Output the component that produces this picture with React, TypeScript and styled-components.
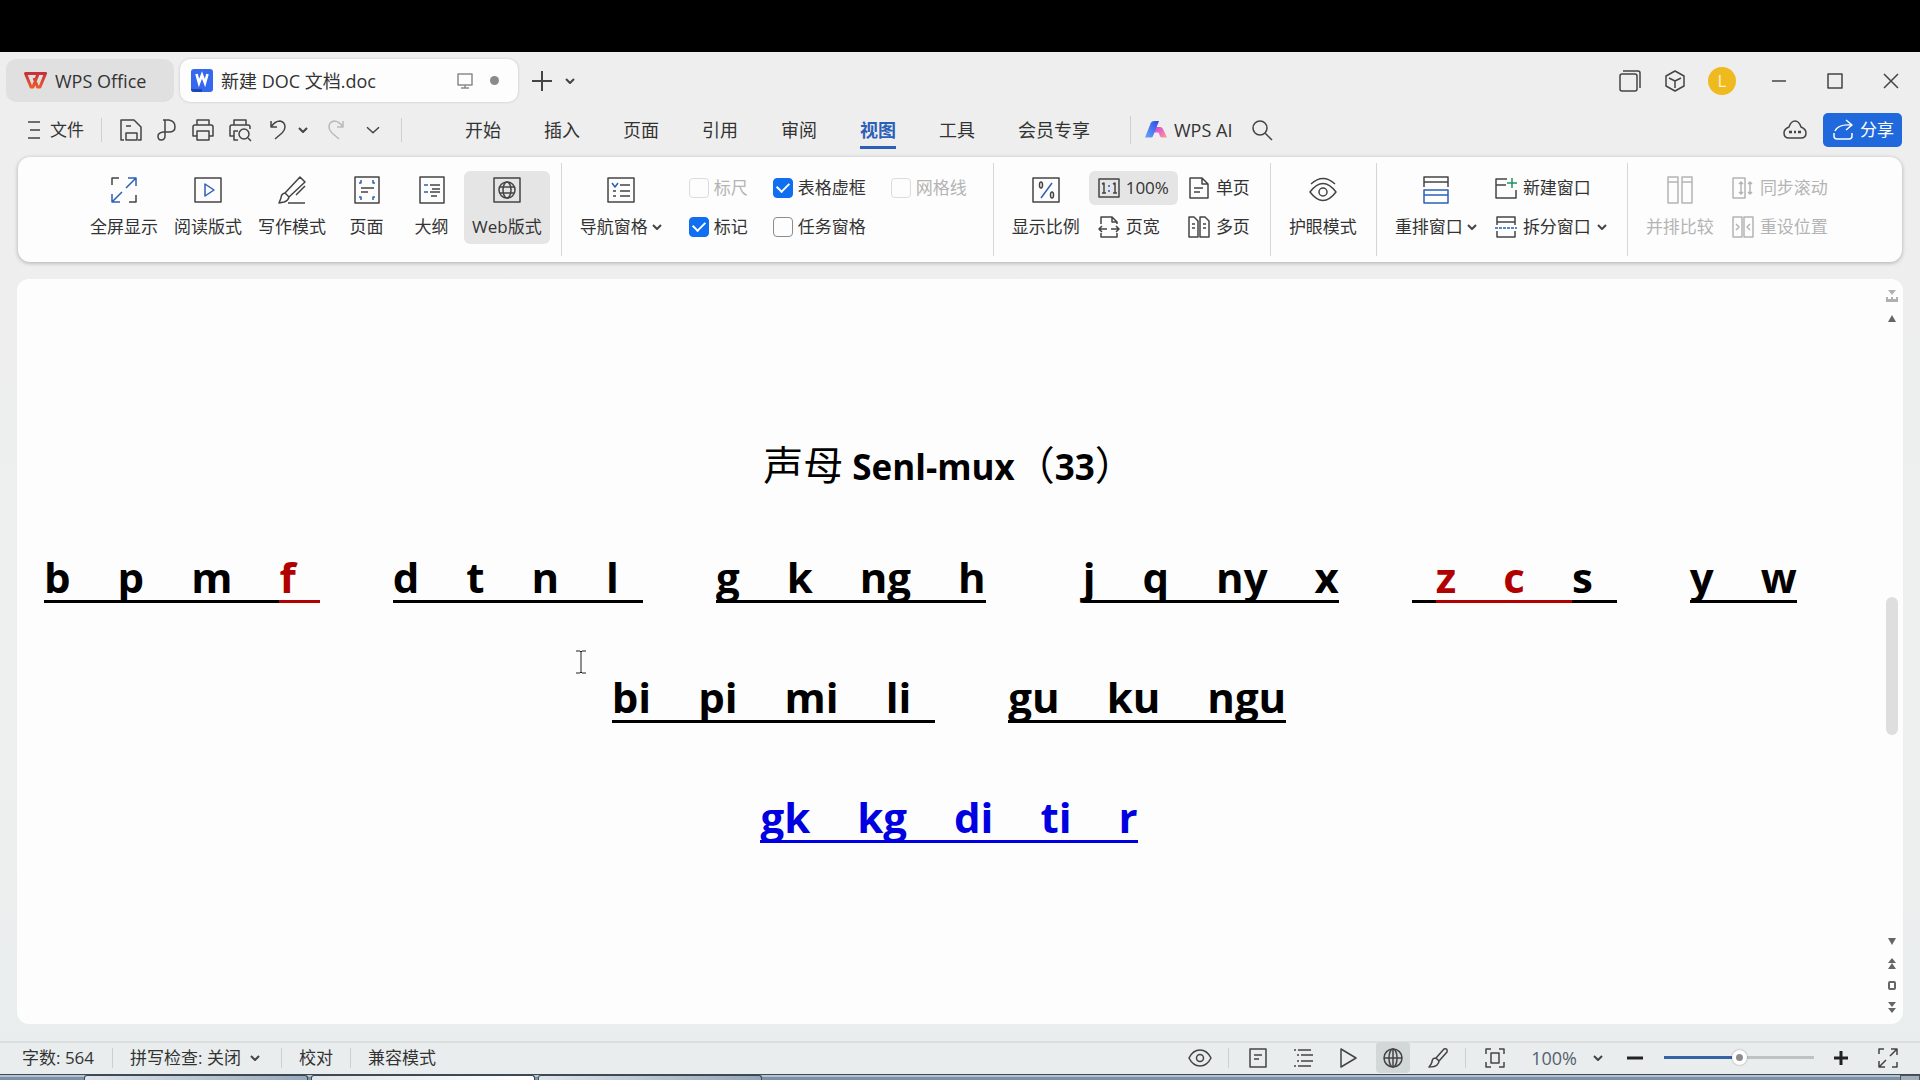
import React, { useState } from "react";
import styled, { createGlobalStyle, css } from "styled-components";

const ink = "#444";
const blue = "#2b5fb8";
const faded = "#b4b4b4";

const GlobalStyle = createGlobalStyle`
  * { box-sizing: border-box; }
  html, body, #root { height: 100%; }
  body {
    margin: 0;
    background: #000;
    color: #333;
    font: 17px/24px "Open Sans", "Noto Sans CJK SC", sans-serif;
  }
  button, select, input { font: inherit; color: inherit; margin: 0; }
  button { border: 0; background: none; padding: 0; }
  svg { display: block; flex: none; }
`;

const Screen = styled.div`
  min-height: 100vh;
  display: flex;
  flex-direction: column;
  padding-top: 52px;
  background: #000;
`;

const AppWindow = styled.div`
  flex: 1;
  display: flex;
  flex-direction: column;
  background: linear-gradient(#eeeeee 0%, #eeefef 70%, #e9eded 100%);
`;

/* ---------- title bar ---------- */

const TitleBar = styled.header`
  height: 50px;
  display: flex;
  align-items: center;
  padding: 7px 17px 0 6px;
`;

const FileTab = styled.button<{ $active?: boolean; $width: number }>`
  width: ${(p) => p.$width}px;
  height: 43px;
  display: flex;
  align-items: center;
  gap: 8px;
  margin-right: 6px;
  padding: 0 ${(p) => (p.$active ? 19 : 18)}px 0 ${(p) => (p.$active ? 11 : 18)}px;
  border-radius: 10px;
  font-size: 18px;
  background: ${(p) => (p.$active ? "#fdfdfd" : "#e0e0e0")};
  box-shadow: ${(p) => (p.$active ? "0 0 3px rgba(0, 0, 0, 0.18)" : "none")};
`;

const TabName = styled.span`
  flex: 1;
  text-align: left;
  white-space: nowrap;
`;

const TabMarks = styled.span`
  display: flex;
  align-items: center;
  gap: 17px;
`;

const Dot = styled.i`
  width: 9px;
  height: 9px;
  border-radius: 50%;
  background: #8a8a8a;
`;

const IconButton = styled.button<{ $width?: number }>`
  width: ${(p) => p.$width ?? 24}px;
  height: 32px;
  display: inline-flex;
  align-items: center;
  justify-content: center;
`;

const Spacer = styled.div`
  flex: 1;
`;

const WindowTools = styled.div`
  display: flex;
  align-items: center;
  gap: 21px;
  margin-right: 31px;
`;

const Avatar = styled.button`
  width: 28px;
  height: 28px;
  border-radius: 50%;
  background: #efb920;
  color: #fff3cf;
  line-height: 28px;
  text-align: center;
`;

const WindowControls = styled.div`
  display: flex;
  gap: 32px;
`;

/* ---------- menu row ---------- */

const MenuRow = styled.nav`
  height: 55px;
  display: flex;
  align-items: center;
  padding: 0 18px 0 28px;
`;

const FileMenu = styled.button`
  display: flex;
  align-items: center;
  gap: 9px;
`;

const Rule = styled.i<{ $space?: string; $height?: number }>`
  width: 1px;
  height: ${(p) => p.$height ?? 24}px;
  margin: ${(p) => p.$space ?? "0 17px"};
  background: #cfcfcf;
`;

const QuickBar = styled.div`
  display: flex;
  align-items: center;
  gap: 13px;
`;

const UndoPair = styled.div`
  display: flex;
  align-items: center;
  gap: 4px;
`;

const MenuTabs = styled.div`
  display: flex;
  gap: 43px;
  margin-left: 46px;
`;

const MenuTab = styled.button<{ $active?: boolean }>`
  height: 38px;
  padding-top: 3px;
  font-size: 18px;
  line-height: 28px;
  border-bottom: 3px solid transparent;
  ${(p) =>
    p.$active &&
    css`
      color: ${blue};
      font-weight: 700;
      border-color: ${blue};
    `}
`;

const AiButton = styled.button`
  display: flex;
  align-items: center;
  gap: 7px;
  margin-right: 18px;
  font-size: 18px;
`;

const ShareButton = styled.button`
  height: 34px;
  display: flex;
  align-items: center;
  gap: 6px;
  margin-left: 16px;
  padding: 0 8px 0 9px;
  border-radius: 5px;
  background: #1f69dc;
  color: #fff;
`;

/* ---------- ribbon ---------- */

const Ribbon = styled.section`
  display: flex;
  min-height: 105px;
  margin: 0 18px;
  padding: 6px 0 6px 53px;
  border-radius: 12px;
  background: #fdfdfd;
  box-shadow: 0 1px 4px rgba(0, 0, 0, 0.28);
`;

const Group = styled.div`
  display: flex;
  align-items: flex-start;
  padding: 8px 11px 0 10px;
  border-left: 1px solid #d6d6d6;
  &:first-child {
    border-left-color: transparent;
  }
`;

const BigButton = styled.button<{ $active?: boolean }>`
  min-width: 65px;
  height: 73px;
  display: flex;
  flex-direction: column;
  align-items: center;
  gap: 11px;
  padding: 5px 8px 0;
  border-radius: 6px;
  white-space: nowrap;
  background: ${(p) => (p.$active ? "#e5e5e5" : "none")};
  &:disabled { color: ${faded}; }
`;

const SmallButton = styled.button<{ $active?: boolean }>`
  height: 34px;
  display: flex;
  align-items: center;
  gap: 6px;
  padding: 0 9px;
  border-radius: 6px;
  white-space: nowrap;
  background: ${(p) => (p.$active ? "#e5e5e5" : "none")};
  &:disabled { color: ${faded}; }
`;

const Stack = styled.div`
  display: flex;
  flex-direction: column;
  gap: 5px;
  margin-left: 1px;
`;

const CaptionRow = styled.span`
  display: flex;
  align-items: center;
  gap: 4px;
`;

const CheckGrid = styled.div`
  display: grid;
  grid-template-columns: repeat(3, auto);
  gap: 5px 25px;
  padding: 0 15px 0 19px;
`;

const CheckLabel = styled.label<{ $disabled?: boolean }>`
  height: 34px;
  display: flex;
  align-items: center;
  gap: 5px;
  white-space: nowrap;
  color: ${(p) => (p.$disabled ? faded : "inherit")};
`;

const CheckBox = styled.input`
  appearance: none;
  width: 20px;
  height: 20px;
  display: grid;
  place-items: center;
  border: 1px solid #8c8c8c;
  border-radius: 4px;
  background: #fdfdfd;
  &:disabled { border-color: #dcdcdc; }
  &:checked { background: #0f6ff0; border-color: #0f6ff0; }
  &:checked::after {
    content: "";
    width: 10px;
    height: 6px;
    margin-bottom: 4px;
    border: solid #fff;
    border-width: 0 0 2px 2px;
    transform: rotate(-45deg);
  }
`;

/* ---------- document ---------- */

const DocumentPane = styled.main`
  position: relative;
  flex: 1;
  display: flex;
  margin: 17px 17px;
  border-radius: 12px;
  background: #fdfdfd;
`;

const Page = styled.article`
  flex: 1;
  padding-top: 148px;
  color: #000;
  font: 700 42px/120px "Open Sans", "Noto Sans CJK SC", sans-serif;
`;

const Heading = styled.h1`
  margin: 0 0 15px;
  font-size: 35px;
  line-height: 72px;
  text-align: center;
`;

const HeadingHan = styled.span`
  font-family: "Noto Sans CJK SC", sans-serif;
  font-size: 40px;
  font-weight: 400;
`;

const Line = styled.p<{ $start?: boolean }>`
  height: 120px;
  display: flex;
  justify-content: ${(p) => (p.$start ? "flex-start" : "center")};
  align-items: center;
  margin: 0;
  padding-left: ${(p) => (p.$start ? 27 : 0)}px;
`;

const Cluster = styled.span<{ $before?: number }>`
  display: flex;
  margin-left: ${(p) => p.$before ?? 0}px;
`;

const Run = styled.span<{ $color?: string; $lead?: number; $tail?: number }>`
  height: 50px;
  display: flex;
  gap: 47px;
  padding: 0 ${(p) => p.$tail ?? 0}px 0 ${(p) => p.$lead ?? 0}px;
  line-height: 48px;
  color: ${(p) => p.$color ?? "#000"};
  border-bottom: 3px solid ${(p) => p.$color ?? "#000"};
`;

const ScrollRail = styled.aside`
  width: 22px;
  display: flex;
  flex-direction: column;
  align-items: center;
  padding: 6px 0;
`;

const RailButton = styled.button`
  width: 22px;
  height: 22px;
  display: grid;
  place-items: center;
`;

const Track = styled.div`
  flex: 1;
  width: 12px;
  display: flex;
  flex-direction: column;
  padding-top: 268px;
`;

const Thumb = styled.div`
  height: 138px;
  border-radius: 6px;
  background: #dedede;
`;

const TextCursor = styled.svg`
  position: absolute;
  left: 559px;
  top: 371px;
`;

/* ---------- status bar ---------- */

const StatusBar = styled.footer`
  height: 33px;
  display: flex;
  align-items: center;
  padding: 0 20px 2px 22px;
  border-top: 2px solid #dcdfdf;
  background: #e9eded;
`;

const StatusButton = styled.button`
  display: flex;
  align-items: center;
  gap: 9px;
  white-space: nowrap;
`;

const ViewButton = styled.button<{ $active?: boolean }>`
  width: 34px;
  height: 31px;
  display: grid;
  place-items: center;
  border-radius: 4px;
  background: ${(p) => (p.$active ? "#d2d7d7" : "none")};
`;

const ViewGroup = styled.div`
  display: flex;
  gap: 11px;
`;

const ZoomText = styled(StatusButton)`
  gap: 16px;
  margin: 0 20px 0 25px;
  font-size: 18px;
  color: #56616e;
`;

const ZoomSlider = styled.input`
  appearance: none;
  width: 150px;
  height: 20px;
  margin: 0 15px 0 17px;
  background: linear-gradient(90deg, #3564a5 50%, #bfc2c3 50%) center / 100% 3px no-repeat;
  &::-webkit-slider-thumb {
    appearance: none;
    width: 15px;
    height: 15px;
    border: 4px solid #fff;
    border-radius: 50%;
    background: #8d8d8d;
    box-shadow: 0 0 2px rgba(0, 0, 0, 0.4);
  }
`;

/* ---------- desktop task bar edge ---------- */

const TaskBar = styled.div`
  height: 6px;
  display: flex;
  gap: 3px;
  padding-left: 84px;
  border-top: 1px solid #3f4a55;
  background: linear-gradient(#b4c2cf 0 2px, #7d91a5 2px);
`;

const TaskItem = styled.i<{ $tone: string; $edge?: string }>`
  width: 224px;
  border: solid #3b4752;
  border-width: 1px 1px 0;
  border-left-color: ${(p) => p.$edge ?? "#3b4752"};
  border-radius: 3px 3px 0 0;
  background: linear-gradient(90deg, #dfe5ea, ${(p) => p.$tone});
`;

const DesktopCorner = styled.i`
  width: 20px;
  margin-left: auto;
  border: 1px solid #4a5661;
  border-bottom: 0;
  background: #a3aeb8;
`;

/* ---------- icons ---------- */

type IconProps = {
  w?: number;
  h?: number;
  color?: string;
  sw?: number;
  children: React.ReactNode;
};

const Icon = ({ w = 24, h = 24, color = ink, sw = 1.5, children }: IconProps) => (
  <svg
    width={w}
    height={h}
    viewBox={`0 0 ${w} ${h}`}
    fill="none"
    stroke={color}
    strokeWidth={sw}
    strokeLinejoin="round"
    aria-hidden="true"
  >
    {children}
  </svg>
);

const Chevron = ({ size = 10, sw = 2 }: { size?: number; sw?: number }) => (
  <Icon w={size} h={size} sw={sw}>
    <path d={`M1 ${size * 0.3}L${size / 2} ${size * 0.7}L${size - 1} ${size * 0.3}`} />
  </Icon>
);

const WpsLogo = () => (
  <svg width="23" height="17" viewBox="0 0 23 17" fill="none" strokeWidth="3" strokeLinejoin="round" aria-hidden="true">
    <defs>
      <linearGradient id="wpsRed" x1="0" y1="0" x2="0" y2="1">
        <stop offset="0" stopColor="#c9303a" />
        <stop offset="1" stopColor="#ec5a2c" />
      </linearGradient>
    </defs>
    <path d="M10 6L13.500 15H16L21.500 1.500H1.500L7 15H9L14 2" stroke="url(#wpsRed)" />
  </svg>
);

const WordLogo = () => (
  <svg width="22" height="23" viewBox="0 0 22 23" aria-hidden="true">
    <rect width="22" height="23" rx="3" fill="#3668ee" />
    <path d="M0 20H11V23H3Q0 23 0 20Z" fill="#1c46b4" />
    <path d="M5.500 5L8 14L11 6L14 14L16.500 5" fill="none" stroke="#fff" strokeWidth="2.600" />
  </svg>
);

const AiLogo = () => (
  <svg width="22" height="17" viewBox="0 0 22 17" aria-hidden="true">
    <defs>
      <linearGradient id="aiBlue" x1="1" y1="0" x2="0" y2="1">
        <stop offset="0" stopColor="#2a49e8" />
        <stop offset="1" stopColor="#6aa5f8" />
      </linearGradient>
      <linearGradient id="aiPink" x1="0" y1="0" x2="1" y2="1">
        <stop offset="0" stopColor="#d43be0" />
        <stop offset="1" stopColor="#ff9a9a" />
      </linearGradient>
    </defs>
    <path d="M10 6H15Q17 6 18 8L22 16.500H17Q15.500 16.500 15 15L13.500 11.500H8Z" fill="url(#aiPink)" />
    <path d="M0 16.500L6 1.500Q7 0 9 0H14L8 15Q7.500 16.500 6 16.500Z" fill="url(#aiBlue)" />
  </svg>
);

const GlobeShape = ({ cx, cy, r }: { cx: number; cy: number; r: number }) => (
  <>
    <circle cx={cx} cy={cy} r={r} />
    <ellipse cx={cx} cy={cy} rx={r * 0.45} ry={r} />
    <path d={`M${cx - r} ${cy}H${cx + r}M${cx} ${cy - r}V${cy + r}`} />
  </>
);

const bigIcons: Record<string, React.ReactNode> = {
  fullscreen: (
    <Icon w={28} h={28}>
      <path d="M2 9V2H9M26 19V26H19" />
      <path d="M16 12L26 2M18 2H26V10M12 16L2 26M2 18V26H10" stroke={blue} />
    </Icon>
  ),
  read: (
    <Icon w={28} h={28}>
      <rect x="1" y="2" width="26" height="24" />
      <path d="M11 8L20 14L11 20Z" stroke={blue} />
    </Icon>
  ),
  write: (
    <Icon w={28} h={28}>
      <path d="M22 1L27 6L11 21L7 17ZM7 17Q3 18 3 22L1 27L6 26Q10 25 11 21M18 19L27 10M10 27H27" />
    </Icon>
  ),
  page: (
    <Icon w={28} h={28}>
      <rect x="2" y="1" width="24" height="26" />
      <path d="M8 12H21M8 16H15" />
      <path d="M6 7H8V4M20 4V7H22M6 21H8V24M20 24V21H22" stroke={blue} />
    </Icon>
  ),
  outline: (
    <Icon w={28} h={28}>
      <rect x="2" y="1" width="24" height="26" />
      <path d="M12 9H22M14 13H22M12 16H22M13 20H19" />
      <path d="M6 9H10M6 16H10" stroke={blue} />
    </Icon>
  ),
  web: (
    <Icon w={28} h={28}>
      <rect x="1" y="2" width="26" height="24" />
      <circle cx="14" cy="14" r="8" />
      <ellipse cx="14" cy="14" rx="4" ry="8" />
      <path d="M7 11H21M7 17H21" />
    </Icon>
  ),
  nav: (
    <Icon w={28} h={28}>
      <rect x="1" y="2" width="26" height="24" />
      <path d="M13 9H23M13 15H23M13 20H23M6 15H9M6 20H9" />
      <path d="M5 7L8 11L11 7" stroke={blue} />
    </Icon>
  ),
  percent: (
    <Icon w={28} h={28}>
      <rect x="1" y="2" width="26" height="24" />
      <path d="M20 7L9 22" stroke={blue} />
      <ellipse cx="9" cy="9" rx="1.500" ry="3" />
      <ellipse cx="20" cy="19" rx="1.500" ry="3" />
    </Icon>
  ),
  eye: (
    <Icon w={28} h={28}>
      <path d="M1 16Q14 -1 27 16Q14 33 1 16Z" />
      <circle cx="14" cy="16" r="4" />
      <path d="M2 8Q14 -3 26 8" />
    </Icon>
  ),
  arrange: (
    <Icon w={28} h={28}>
      <path d="M2 11V1H26V11M2 6H26" />
      <path d="M2 14H26V27H2ZM2 19H26" stroke={blue} />
    </Icon>
  ),
  compare: (
    <Icon w={28} h={28} color={faded}>
      <path d="M2 1H12V27H2ZM2 6H12M16 1H26V27H16ZM16 6H26" />
    </Icon>
  ),
};

const smallIcons: Record<string, React.ReactNode> = {
  ratio: (
    <Icon w={22} h={22}>
      <rect x="1" y="2" width="20" height="18" />
      <path d="M4 7L6 6V16M4 16H8M15 7L17 6V16M15 16H19" />
      <path d="M11 8V10M11 13V15" stroke={blue} />
    </Icon>
  ),
  width: (
    <Icon w={22} h={22}>
      <path d="M3 8V1H14L19 6V8M14 1V6H19M3 17V21H19V17M9 13H1M4 10L1 13L4 16M13 13H21M18 10L21 13L18 16" />
    </Icon>
  ),
  single: (
    <Icon w={22} h={22}>
      <path d="M2 1H14L20 7V21H2ZM14 1V7H20M6 11H15M6 15H12" />
    </Icon>
  ),
  multi: (
    <Icon w={22} h={22}>
      <path d="M1 1H6L10 5V21H1ZM12 1H17L21 5V21H12ZM4 8H7M4 12H7M15 8H18M15 12H18" />
    </Icon>
  ),
  newWindow: (
    <Icon w={22} h={22}>
      <path d="M12 2H1V21H21V13M1 8H11" />
      <path d="M17 1V11M12 6H22" stroke="#1e9461" />
    </Icon>
  ),
  split: (
    <Icon w={22} h={22}>
      <path d="M2 9V1H20V9M2 6H20M2 15V21H20V15" />
      <path d="M0 12H22" stroke={blue} strokeDasharray="3 1" />
    </Icon>
  ),
  sync: (
    <Icon w={22} h={22} color={faded}>
      <path d="M1 1H13V21H1ZM9 5V17M7 7L9 5L11 7M7 15L9 17L11 15M18 5V17M16 7L18 5L20 7M16 15L18 17L20 15" />
    </Icon>
  ),
  reset: (
    <Icon w={22} h={22} color={faded}>
      <path d="M1 1H10V21H1ZM12 1H21V21H12ZM4 8L7 11L4 14M18 8L15 11L18 14" />
    </Icon>
  ),
};

const PenShape = () => (
  <path d="M17 2Q21 1 20 5L12 14L9 11ZM9 11Q5 11 5 15Q4 18 2 20Q8 20 10 18Q12 16 12 14" />
);

/* ---------- parts ---------- */

type ButtonData = { icon: string; label: string; active?: boolean; disabled?: boolean; menu?: boolean };

const Big = ({ icon, label, active, disabled, menu }: ButtonData) => (
  <BigButton $active={active} disabled={disabled}>
    {bigIcons[icon]}
    <CaptionRow>
      {label}
      {menu && <Chevron />}
    </CaptionRow>
  </BigButton>
);

const Small = ({ icon, label, active, disabled, menu }: ButtonData) => (
  <SmallButton $active={active} disabled={disabled}>
    {smallIcons[icon]}
    {label}
    {menu && <Chevron />}
  </SmallButton>
);

const Check = ({ label, on, disabled }: { label: string; on?: boolean; disabled?: boolean }) => (
  <CheckLabel $disabled={disabled}>
    <CheckBox type="checkbox" defaultChecked={on} disabled={disabled} />
    {label}
  </CheckLabel>
);

type RunData = { letters: string[]; color?: string; lead?: number; tail?: number };

const Letters = ({ runs, before }: { runs: RunData[]; before?: number }) => (
  <Cluster $before={before}>
    {runs.map((run, i) => (
      <Run key={i} $color={run.color} $lead={run.lead} $tail={run.tail}>
        {run.letters.map((letter) => (
          <span key={letter}>{letter}</span>
        ))}
      </Run>
    ))}
  </Cluster>
);

const red = "#b00000";
const link = "#0000e0";
const menuNames = ["开始", "插入", "页面", "引用", "审阅", "视图", "工具", "会员专享"];

export default function App() {
  const [zoom, setZoom] = useState(100);

  return (
    <Screen>
      <GlobalStyle />
      <AppWindow>
        <TitleBar>
          <FileTab $width={168}>
            <WpsLogo />
            <TabName>WPS Office</TabName>
          </FileTab>
          <FileTab $active $width={338}>
            <WordLogo />
            <TabName>新建 DOC 文档.doc</TabName>
            <TabMarks>
              <Icon w={16} h={16} color="#8a8a8a">
                <path d="M1 1H15V12H1ZM8 12V15M4 15H12" />
              </Icon>
              <Dot />
            </TabMarks>
          </FileTab>
          <IconButton $width={36} aria-label="新建">
            <Icon w={20} h={20} sw={2}>
              <path d="M10 0V20M0 10H20" />
            </Icon>
          </IconButton>
          <IconButton $width={20} aria-label="标签列表">
            <Chevron />
          </IconButton>
          <Spacer />
          <WindowTools>
            <IconButton aria-label="窗口">
              <Icon>
                <rect x="2" y="5" width="17" height="17" rx="2" />
                <path d="M5 2H20Q22 2 22 4V19" />
              </Icon>
            </IconButton>
            <IconButton aria-label="应用">
              <Icon>
                <path d="M12 2L21 7V17L12 22L3 17V7ZM6 9L12 12L18 9M12 12V19" />
              </Icon>
            </IconButton>
            <Avatar>L</Avatar>
          </WindowTools>
          <WindowControls>
            <IconButton aria-label="最小化">
              <Icon><path d="M5 12H19" /></Icon>
            </IconButton>
            <IconButton aria-label="最大化">
              <Icon><path d="M5 5H19V19H5Z" /></Icon>
            </IconButton>
            <IconButton aria-label="关闭">
              <Icon><path d="M5 5L19 19M19 5L5 19" /></Icon>
            </IconButton>
          </WindowControls>
        </TitleBar>

        <MenuRow>
          <FileMenu>
            <Icon w={13} h={18}>
              <path d="M0 1H12M2 9H12M0 17H12" />
            </Icon>
            文件
          </FileMenu>
          <Rule />
          <QuickBar>
            <IconButton aria-label="保存">
              <Icon>
                <path d="M5 22H2V2H15L22 9V22H19M7 22V15H18V22ZM7 8H12" />
              </Icon>
            </IconButton>
            <IconButton $width={22} aria-label="输出">
              <Icon>
                <path d="M8 2H14Q20 3 20 9Q20 14 14 14H8Q3 15 3 18Q3 22 6 22Q10 22 10 18V2" />
              </Icon>
            </IconButton>
            <IconButton aria-label="打印">
              <Icon>
                <path d="M6 7V2H18V7M6 18H2V9Q2 7 4 7H20Q22 7 22 9V18H18M6 13H18V22H6Z" />
              </Icon>
            </IconButton>
            <IconButton aria-label="打印预览">
              <Icon>
                <path d="M6 7V2H18V7M6 18H2V9Q2 7 4 7H20Q22 7 22 9V11M10 22H6V13H10M20 20L23 23" />
                <circle cx="16" cy="16" r="5" />
              </Icon>
            </IconButton>
            <UndoPair>
              <IconButton $width={26} aria-label="撤销">
                <Icon>
                  <path d="M5 3V9H11M5 9Q9 3 14 3Q19 4 19 9Q19 12 16 15L9 21" />
                </Icon>
              </IconButton>
              <IconButton $width={16} aria-label="撤销列表">
                <Chevron />
              </IconButton>
            </UndoPair>
            <IconButton aria-label="恢复" disabled>
              <Icon color="#bababa">
                <path d="M19 3V9H13M19 9Q15 3 10 3Q5 4 5 9Q5 12 8 15L15 21" />
              </Icon>
            </IconButton>
            <IconButton aria-label="更多">
              <Chevron size={14} sw={1.5} />
            </IconButton>
          </QuickBar>
          <Rule $space="0 17px 0 16px" />
          <MenuTabs>
            {menuNames.map((name) => (
              <MenuTab key={name} $active={name === "视图"}>
                {name}
              </MenuTab>
            ))}
          </MenuTabs>
          <Rule $height={28} $space="0 14px 0 40px" />
          <AiButton>
            <AiLogo />
            WPS AI
          </AiButton>
          <IconButton aria-label="搜索">
            <Icon>
              <circle cx="10" cy="10" r="7" />
              <path d="M15 15L22 22" />
            </Icon>
          </IconButton>
          <Spacer />
          <IconButton aria-label="云同步">
            <Icon>
              <path d="M6 20Q1 20 1 15Q1 11 6 9Q8 3 12 3Q16 3 18 9Q23 11 23 15Q23 20 18 20Z" />
              <path d="M6 14H9M11 14H13M15 14H18" strokeWidth="2.500" />
            </Icon>
          </IconButton>
          <ShareButton>
            <Icon w={22} h={22} color="#fff">
              <path d="M2 14V17Q2 20 5 20H17Q20 20 20 17V14M3 12Q6 5 19 6M14 1L20 6L14 11" />
            </Icon>
            分享
          </ShareButton>
        </MenuRow>

        <Ribbon>
          <Group>
            <Big icon="fullscreen" label="全屏显示" />
            <Big icon="read" label="阅读版式" />
            <Big icon="write" label="写作模式" />
            <Big icon="page" label="页面" />
            <Big icon="outline" label="大纲" />
            <Big icon="web" label="Web版式" active />
          </Group>
          <Group>
            <Big icon="nav" label="导航窗格" menu />
            <CheckGrid>
              <Check label="标尺" disabled />
              <Check label="表格虚框" on />
              <Check label="网格线" disabled />
              <Check label="标记" on />
              <Check label="任务窗格" />
            </CheckGrid>
          </Group>
          <Group>
            <Big icon="percent" label="显示比例" />
            <Stack>
              <Small icon="ratio" label="100%" active />
              <Small icon="width" label="页宽" />
            </Stack>
            <Stack>
              <Small icon="single" label="单页" />
              <Small icon="multi" label="多页" />
            </Stack>
          </Group>
          <Group>
            <Big icon="eye" label="护眼模式" />
          </Group>
          <Group>
            <Big icon="arrange" label="重排窗口" menu />
            <Stack>
              <Small icon="newWindow" label="新建窗口" />
              <Small icon="split" label="拆分窗口" menu />
            </Stack>
          </Group>
          <Group>
            <Big icon="compare" label="并排比较" disabled />
            <Stack>
              <Small icon="sync" label="同步滚动" disabled />
              <Small icon="reset" label="重设位置" disabled />
            </Stack>
          </Group>
        </Ribbon>

        <DocumentPane>
          <Page>
            <Heading>
              <HeadingHan>声母</HeadingHan> Senl-mux<HeadingHan>（</HeadingHan>33<HeadingHan>）</HeadingHan>
            </Heading>
            <Line $start>
              <Letters runs={[{ letters: ["b", "p", "m"], tail: 47 }, { letters: ["f"], color: red, tail: 24 }]} />
              <Letters before={73} runs={[{ letters: ["d", "t", "n", "l"], tail: 24 }]} />
              <Letters before={73} runs={[{ letters: ["g", "k", "ng", "h"] }]} />
              <Letters before={97} runs={[{ letters: ["j", "q", "ny", "x"] }]} />
              <Letters
                before={73}
                runs={[
                  { letters: [], lead: 24 },
                  { letters: ["z", "c"], color: red, tail: 47 },
                  { letters: ["s"], tail: 24 },
                ]}
              />
              <Letters before={73} runs={[{ letters: ["y", "w"] }]} />
            </Line>
            <Line>
              <Letters runs={[{ letters: ["bi", "pi", "mi", "li"], tail: 24 }]} />
              <Letters before={73} runs={[{ letters: ["gu", "ku", "ngu"] }]} />
            </Line>
            <Line>
              <Letters runs={[{ letters: ["gk", "kg", "di", "ti", "r"], color: link }]} />
            </Line>
          </Page>
          <TextCursor width="10" height="24" viewBox="0 0 10 24" fill="none" stroke="#222" aria-hidden="true">
            <path d="M0 1H4L5 2L6 1H10M5 2V22M0 23H4L5 22L6 23H10" />
          </TextCursor>
          <ScrollRail>
            <RailButton aria-label="标尺开关">
              <svg width="12" height="12" viewBox="0 0 12 12" fill="#b0b0b0" aria-hidden="true">
                <path d="M2 0H10L6 5ZM0 7H2V9H5V7H7V9H10V7H12V12H0Z" />
              </svg>
            </RailButton>
            <RailButton aria-label="向上滚动">
              <svg width="8" height="7" viewBox="0 0 8 7" fill="#666" aria-hidden="true">
                <path d="M4 0L8 7H0Z" />
              </svg>
            </RailButton>
            <Track>
              <Thumb />
            </Track>
            <RailButton aria-label="向下滚动">
              <svg width="8" height="7" viewBox="0 0 8 7" fill="#666" aria-hidden="true">
                <path d="M0 0H8L4 7Z" />
              </svg>
            </RailButton>
            <RailButton aria-label="上一页">
              <svg width="8" height="11" viewBox="0 0 8 11" fill="#666" aria-hidden="true">
                <path d="M4 0L8 5H0ZM4 5L8 11H0Z" />
              </svg>
            </RailButton>
            <RailButton aria-label="浏览对象">
              <svg width="8" height="9" viewBox="0 0 8 9" fill="none" stroke="#666" strokeWidth="2" aria-hidden="true">
                <rect x="1" y="1" width="6" height="7" rx="1" />
              </svg>
            </RailButton>
            <RailButton aria-label="下一页">
              <svg width="8" height="11" viewBox="0 0 8 11" fill="#666" aria-hidden="true">
                <path d="M0 0H8L4 5ZM0 6H8L4 11Z" />
              </svg>
            </RailButton>
          </ScrollRail>
        </DocumentPane>

        <StatusBar>
          <StatusButton>字数: 564</StatusButton>
          <Rule $height={20} $space="0 17px 0 18px" />
          <StatusButton>
            拼写检查: 关闭
            <Chevron />
          </StatusButton>
          <Rule $height={20} $space="0 17px 0 21px" />
          <StatusButton>校对</StatusButton>
          <Rule $height={20} />
          <StatusButton>兼容模式</StatusButton>
          <Spacer />
          <IconButton aria-label="护眼">
            <Icon>
              <path d="M1 12Q5 4 12 4Q19 4 23 12Q19 20 12 20Q5 20 1 12Z" />
              <circle cx="12" cy="12" r="3.500" />
            </Icon>
          </IconButton>
          <Rule $height={20} $space="0 12px 0 16px" />
          <ViewGroup>
            <ViewButton aria-label="页面视图">
              <Icon w={20} h={20}><path d="M2 1H18V19H2ZM6 7H14M6 11H11" /></Icon>
            </ViewButton>
            <ViewButton aria-label="大纲视图">
              <Icon w={20} h={20}><path d="M5 2H18M8 7H20M8 13H20M5 18H18M1 2H3M4 7H6M4 13H6M1 18H3" /></Icon>
            </ViewButton>
            <ViewButton aria-label="阅读视图">
              <Icon w={20} h={20}><path d="M3 1L18 10L3 19Z" /></Icon>
            </ViewButton>
            <ViewButton $active aria-label="Web视图">
              <Icon w={20} h={20}><GlobeShape cx={10} cy={10} r={9} /></Icon>
            </ViewButton>
            <ViewButton aria-label="写作视图">
              <Icon w={22} h={22}><PenShape /></Icon>
            </ViewButton>
          </ViewGroup>
          <Rule $height={20} $space="0 18px 0 10px" />
          <IconButton $width={22} aria-label="适应窗口">
            <Icon w={20} h={20}>
              <path d="M1 6V1H6M14 1H19V6M19 14V19H14M6 19H1V14M6 5H14V15H6Z" />
            </Icon>
          </IconButton>
          <ZoomText>
            {zoom}%
            <Chevron />
          </ZoomText>
          <IconButton aria-label="缩小" onClick={() => setZoom(Math.max(10, zoom - 10))}>
            <Icon w={16} h={16} sw={3} color="#222"><path d="M0 8H16" /></Icon>
          </IconButton>
          <ZoomSlider
            type="range"
            aria-label="缩放"
            min={10}
            max={190}
            value={zoom}
            onChange={(e) => setZoom(Number(e.target.value))}
          />
          <IconButton aria-label="放大" onClick={() => setZoom(Math.min(190, zoom + 10))}>
            <Icon w={14} h={14} sw={3} color="#222"><path d="M0 7H14M7 0V14" /></Icon>
          </IconButton>
          <Rule $height={0} $space="0 11px" />
          <IconButton aria-label="全屏">
            <Icon w={20} h={20}>
              <path d="M1 6V1H6M14 19H19V14M12 8L19 1M13 1H19V7M8 12L1 19M1 13V19H7" />
            </Icon>
          </IconButton>
        </StatusBar>
        <TaskBar>
          <TaskItem $tone="#97a9bb" />
          <TaskItem $tone="#ffffff" />
          <TaskItem $tone="#93a5b7" $edge="#2f6a4a" />
          <DesktopCorner />
        </TaskBar>
      </AppWindow>
    </Screen>
  );
}
